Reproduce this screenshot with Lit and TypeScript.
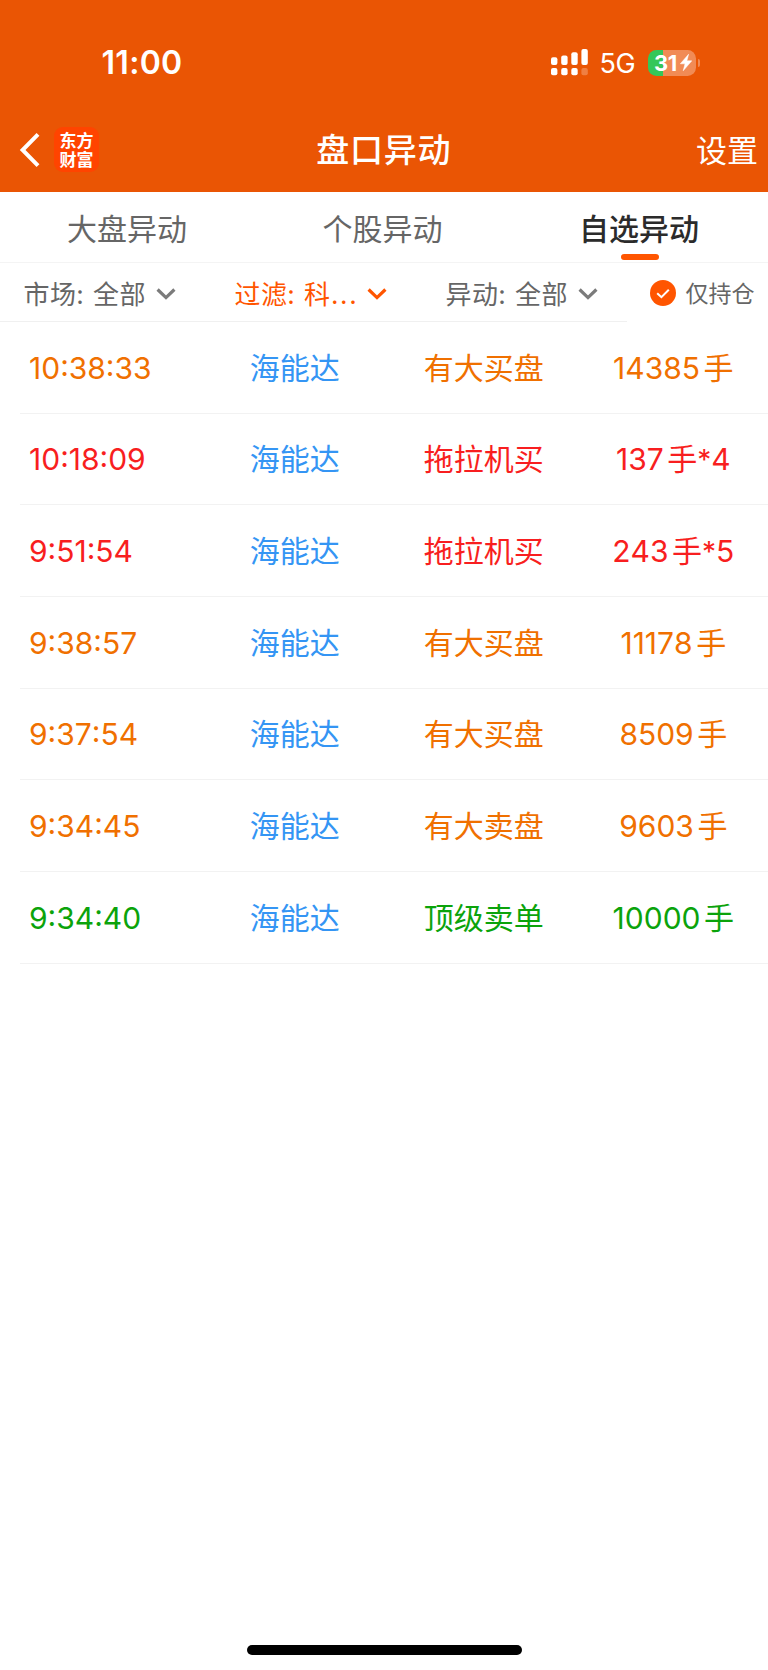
import { LitElement, html, css, svg, nothing } from "lit";
import { customElement, property } from "lit/decorators.js";

type Tone = "orange" | "red" | "green";
interface Alert {
  time: string;
  name: string;
  kind: string;
  count: string;
  times: string;
  tone: Tone;
}

const ALERTS: Alert[] = [
  { time: "10:38:33", name: "海能达", kind: "有大买盘", count: "14385", times: "", tone: "orange" },
  { time: "10:18:09", name: "海能达", kind: "拖拉机买", count: "137", times: "4", tone: "red" },
  { time: "9:51:54", name: "海能达", kind: "拖拉机买", count: "243", times: "5", tone: "red" },
  { time: "9:38:57", name: "海能达", kind: "有大买盘", count: "11178", times: "", tone: "orange" },
  { time: "9:37:54", name: "海能达", kind: "有大买盘", count: "8509", times: "", tone: "orange" },
  { time: "9:34:45", name: "海能达", kind: "有大卖盘", count: "9603", times: "", tone: "orange" },
  { time: "9:34:40", name: "海能达", kind: "顶级卖单", count: "10000", times: "", tone: "green" },
];

@customElement("status-bar")
class StatusBar extends LitElement {
  static styles = css`
    :host { display: flex; align-items: center; height: 125px; padding: 0 68px 0 101.5px; box-sizing: border-box; color: #fff; }
    .clock { flex: 1; font-size: 32px; font-weight: 600; line-height: 40px; letter-spacing: 0.3px; padding-top: 1px; }
    .signal { display: block; margin-right: 11.5px; }
    .net { width: 48.5px; font-size: 27px; line-height: 34px; letter-spacing: -0.5px; padding-top: 2px; }
    .battery { display: flex; align-items: center; }
    .cell { display: flex; align-items: center; box-sizing: border-box; width: 48px; height: 26px; padding-left: 6px; border-radius: 8.5px;
      background: linear-gradient(90deg, #34c759 0 15px, #f18b55 15px); }
    .level { font-size: 22px; font-weight: 700; line-height: 26px; letter-spacing: -0.4px; width: 25.5px; }
    .bolt { display: block; }
    .nub { display: block; width: 2px; height: 8px; margin-left: 2px; border-radius: 0 2px 2px 0; background: #f18b55; }
  `;
  render() {
    const xs = [0, 10.2, 20.3, 30.4];
    const tops = [8.3, 6.6, 3.2, 0];
    return html`
      <div class="clock">11:00</div>
      <svg class="signal" width="37" height="27" viewBox="0 0 37 27">
        ${xs.map((x, i) => svg`
          <rect x=${x} y=${tops[i]} width="6.4" height=${16 - tops[i]} rx="2" fill="#fff"></rect>
          <rect x=${x} y="19" width="6.4" height="7.2" rx="2" fill="#fff" opacity=${i === 3 ? 0.25 : 1}></rect>`)}
      </svg>
      <div class="net">5G</div>
      <div class="battery">
        <div class="cell">
          <span class="level">31</span>
          <svg class="bolt" width="12" height="17" viewBox="0 0 12 17"><path d="M8.6 0.2 L0.3 9.8 H5 L3.2 16.8 L11.8 6.8 H6.9 Z" fill="#fff" stroke="#fff" stroke-width="0.5" stroke-linejoin="round"></path></svg>
        </div>
        <span class="nub"></span>
      </div>`;
  }
}

@customElement("nav-bar")
class NavBar extends LitElement {
  static styles = css`
    :host { display: grid; grid-template-columns: 1fr auto 1fr; align-items: center; height: 67px; padding: 0 10px 17px 18px; box-sizing: border-box; color: #fff; }
    .left { display: flex; align-items: center; }
    .back { display: block; }
    .logo { box-sizing: border-box; width: 45px; height: 45px; padding: 3px 5px 0; margin: 0 0 1px 13px; border-radius: 9px; background: #ff4400;
      text-align: center; font-family: "Noto Sans CJK SC", sans-serif; font-size: 17px; font-weight: 700; line-height: 19px; }
    .title { font-size: 33px; font-weight: 500; line-height: 48px; letter-spacing: 0.8px; margin-left: -8.5px; }
    .action { text-align: right; font-size: 31px; line-height: 48px; padding-top: 1px; }
  `;
  render() {
    return html`
      <div class="left">
        <svg class="back" width="23" height="36" viewBox="0 0 23 36"><path d="M20 2.4 L4.6 18 L20 33.6" fill="none" stroke="#fff" stroke-width="4"></path></svg>
        <div class="logo">东方财富</div>
      </div>
      <div class="title">盘口异动</div>
      <div class="action">设置</div>`;
  }
}

@customElement("filter-item")
class FilterItem extends LitElement {
  @property() label = "";
  @property() value = "";
  @property({ type: Boolean }) clipped = false;
  @property({ type: Boolean, reflect: true }) active = false;
  static styles = css`
    :host { display: flex; flex: none; align-items: center; width: 211px; font-size: 26px; line-height: 36px; color: #666; letter-spacing: 0.4px; white-space: nowrap; }
    :host([active]) { color: #ff5500; }
    .label { width: 69.5px; padding-top: 1px; }
    .value { width: 63px; padding-top: 1px; }
    .dots { letter-spacing: 1.7px; margin-left: 0.5px; }
    .arrow { display: block; }
    .arrow path { stroke: #7b7b7b; }
    :host([active]) .arrow path { stroke: #ff5500; }
  `;
  render() {
    return html`<span class="label">${this.label}:</span><span class="value">${this.value}${this.clipped ? html`<span class="dots">...</span>` : nothing}</span>
      <svg class="arrow" width="20" height="14" viewBox="0 0 20 14"><path d="M1.6 2.5 L10 10.6 L18.4 2.5" fill="none" stroke-width="3.2"></path></svg>`;
  }
}

@customElement("alert-row")
class AlertRow extends LitElement {
  @property({ attribute: false }) alert!: Alert;
  @property({ reflect: true }) tone: Tone = "orange";
  static styles = css`
    :host { display: grid; grid-template-columns: 180.8px 189px 189px 190px; align-items: center; height: 91.7px; margin-left: 19.5px; box-sizing: border-box;
      border-bottom: 1px solid #f2f2f2; padding-top: 0.6px; font-size: 30px; line-height: 44px; white-space: nowrap; font-kerning: none; }
    :host([tone="orange"]) { color: #f07000; }
    :host([tone="red"]) { color: #f81e20; }
    :host([tone="green"]) { color: #0ba30b; }
    .time { padding-left: 9.5px; }
    .name, .kind, .amount { text-align: center; }
    .name { color: #3495f4; }
    .unit { margin-left: 3.5px; }
    .star { font-size: 28px; }
  `;
  render() {
    const a = this.alert;
    return html`<span class="time">${a.time}</span><span class="name">${a.name}</span><span class="kind">${a.kind}</span><span class="amount">${a.count}<span class="unit">手</span>${a.times ? html`<span class="star">*</span>${a.times}` : nothing}</span>`;
  }
}

@customElement("app-root")
class AppRoot extends LitElement {
  static styles = css`
    :host { display: flex; flex-direction: column; box-sizing: border-box; width: 768px; height: 1670px; background: #fff;
      font-family: Inter, "Noto Sans CJK SC", sans-serif; }
    .header { background: #ea5504; height: 192px; flex: none; }
    .tabs { display: grid; grid-template-columns: 254px 257px 256px; height: 71px; box-sizing: border-box; border-bottom: 1px solid #f4f4f4; flex: none; }
    .tab { display: flex; flex-direction: column; align-items: center; font-size: 30px; line-height: 44px; color: #666; padding-top: 14.5px; }
    .current { color: #2b2b2b; font-weight: 500; }
    .mark { width: 38px; height: 6px; border-radius: 3px; background: #ff5500; margin: 3.5px 0 0 1px; }
    .filters { display: flex; height: 59px; flex: none; }
    .selects { display: flex; align-items: center; box-sizing: border-box; width: 626.5px; flex: none; padding: 4px 0 0 23.5px; border-bottom: 1px solid #f0f0f0; }
    .hold { display: flex; align-items: center; padding: 1px 0 0 23.5px; font-size: 23px; line-height: 34px; color: #666; }
    .hold span { padding-top: 2px; }
    .check { display: block; margin-right: 9.5px; }
    .list { flex: 1; }
    .home { align-self: center; width: 275px; height: 10px; border-radius: 5px; background: #000; margin-bottom: 15.5px; flex: none; }
  `;
  render() {
    return html`
      <div class="header"><status-bar></status-bar><nav-bar></nav-bar></div>
      <div class="tabs">
        <div class="tab">大盘异动</div>
        <div class="tab">个股异动</div>
        <div class="tab current">自选异动<span class="mark"></span></div>
      </div>
      <div class="filters">
        <div class="selects">
          <filter-item label="市场" value="全部"></filter-item>
          <filter-item label="过滤" value="科" clipped active></filter-item>
          <filter-item label="异动" value="全部"></filter-item>
        </div>
        <div class="hold">
          <svg class="check" width="26" height="26" viewBox="0 0 26 26"><circle cx="13" cy="13" r="13" fill="#ff5500"></circle><path d="M7.2 13.2 L11.4 17.2 L18.8 9.8" fill="none" stroke="#fff" stroke-width="2"></path></svg>
          <span>仅持仓</span>
        </div>
      </div>
      <div class="list">${ALERTS.map((a) => html`<alert-row .alert=${a} tone=${a.tone}></alert-row>`)}</div>
      <div class="home"></div>`;
  }
}
